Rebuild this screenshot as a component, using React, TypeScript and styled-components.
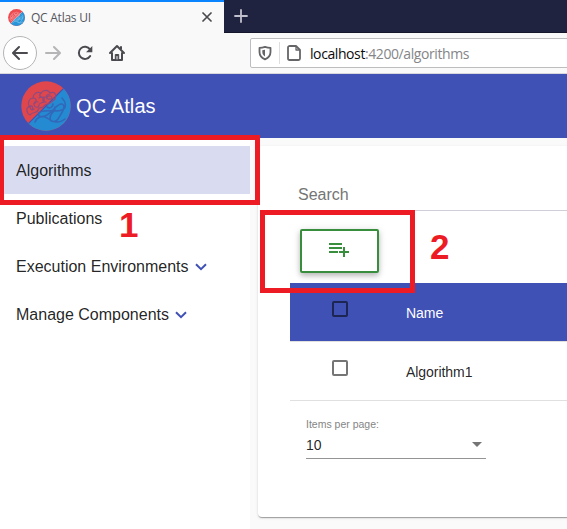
import React from "react";
import styled, { createGlobalStyle } from "styled-components";

const Global = createGlobalStyle`
  *, *::before, *::after { box-sizing: border-box; }
  body { margin: 0; overflow: hidden; background: #fafafa; font-family: "Liberation Sans", Arial, sans-serif; color: rgba(0,0,0,.87); }
  svg { display: block; flex: none; }
`;

const Window = styled.div`
  position: relative;
  width: 567px;
  height: 529px;
  overflow: hidden;
  background: #fafafa;
`;
const TabStrip = styled.div`
  display: flex;
  height: 33px;
  background: #202340;
  border-bottom: 1px solid #15162c;
`;
const Tab = styled.div`
  display: flex;
  align-items: center;
  width: 224px;
  height: 33px;
  padding: 0 11px 0 8px;
  background: #f9f9fa;
  border-top: 2px solid #0a84ff;
`;
const TabTitle = styled.span`
  flex: 1;
  margin-left: 6px;
  font: 12px "Open Sans", sans-serif;
  letter-spacing: -0.25px;
  color: #55555c;
`;
const NewTab = styled.div`
  padding: 9px 0 0 10px;
`;
const Toolbar = styled.div`
  display: flex;
  align-items: center;
  height: 41px;
  padding-left: 3px;
  background: #f9f9fa;
  border-bottom: 1px solid #d8d8dc;
`;
const NavButton = styled.span<{ $gap: number; $circle?: boolean }>`
  display: flex;
  align-items: center;
  justify-content: center;
  flex: none;
  width: ${(p) => (p.$circle ? 34 : 18)}px;
  height: ${(p) => (p.$circle ? 34 : 18)}px;
  margin-right: ${(p) => p.$gap}px;
  border: ${(p) => (p.$circle ? "1px solid #b5b5b8" : "none")};
  background: ${(p) => (p.$circle ? "#fff" : "none")};
  border-radius: 50%;
`;
const Address = styled.div`
  display: flex;
  align-items: center;
  flex: none;
  width: 340px;
  height: 30px;
  padding-left: 7px;
  background: #fff;
  border: 1px solid #bdbdc0;
  border-radius: 2px;
`;
const Divider = styled.span`
  width: 1px;
  height: 22px;
  margin: 0 6px 0 7px;
  background: #dedee0;
`;
const Url = styled.span`
  margin-left: 8px;
  padding-top: 1px;
  font: 14px "Open Sans", sans-serif;
  letter-spacing: -0.41px;
  color: #858588;
  b { font-weight: 400; color: #0c0c0d; }
`;
const Header = styled.header`
  display: flex;
  align-items: center;
  height: 64px;
  padding-left: 21px;
  gap: 5px;
  background: #3f51b5;
  color: #fff;
  font-size: 20px;
  letter-spacing: 0.1px;
`;
const Body = styled.div`
  display: flex;
  height: 391px;
`;
const Sidebar = styled.nav`
  flex: none;
  width: 250px;
  padding-top: 8px;
  background: #fff;
`;
const NavItem = styled.div<{ $active?: boolean }>`
  display: flex;
  align-items: center;
  height: 48px;
  padding: 2px 0 0 16px;
  gap: 6px;
  font-size: 16px;
  background: ${(p) => (p.$active ? "#d9dcf0" : "transparent")};
`;
const Card = styled.main`
  flex: none;
  width: 340px;
  height: 371px;
  margin: 8px 0 0 8px;
  padding-left: 32px;
  background: #fff;
  border-radius: 4px;
  box-shadow: 0 2px 1px -1px rgba(0,0,0,.2), 0 1px 1px rgba(0,0,0,.14), 0 1px 3px rgba(0,0,0,.12);
`;
const Search = styled.div`
  height: 65px;
  margin-left: 8px;
  padding-top: 39px;
  border-bottom: 1px solid #cfcfda;
  font-size: 16px;
  line-height: 19px;
  color: #757575;
`;
const AddButton = styled.div`
  display: flex;
  width: 79px;
  height: 44px;
  margin: 18px 0 10px 10px;
  padding: 7px 0 0 25px;
  border: 2px solid #388e3c;
  border-radius: 2px;
  box-shadow: 0 3px 5px rgba(0,0,0,.2), 0 1px 8px rgba(0,0,0,.12);
`;
const Row = styled.div<{ $head?: boolean }>`
  display: flex;
  align-items: center;
  height: 59px;
  padding-left: 42px;
  border-bottom: 1px solid #e0e0e0;
  font-size: 14px;
  color: ${(p) => (p.$head ? "#fff" : "rgba(0,0,0,.87)")};
  background: ${(p) => (p.$head ? "#3f51b5" : "#fff")};
`;
const Checkbox = styled.span<{ $dark?: boolean }>`
  width: 16px;
  height: 16px;
  margin: 0 58px 7px 0;
  border: 2px solid ${(p) => (p.$dark ? "#1d2553" : "#757575")};
  border-radius: 2px;
`;
const CellText = styled.span`
  padding-top: 2px;
  letter-spacing: -0.05px;
`;
const Paginator = styled.div`
  width: 180px;
  margin: 16px 0 0 16px;
`;
const PageLabel = styled.div`
  font-size: 10.5px;
  line-height: 14px;
  color: #858585;
`;
const Select = styled.div`
  display: flex;
  align-items: center;
  justify-content: space-between;
  height: 28px;
  padding: 0 4px 0 0;
  border-bottom: 1px solid #949494;
  font-size: 14px;
`;
const Highlight = styled.div<{ $x: number; $y: number; $w: number; $h: number; $left: number }>`
  position: absolute;
  left: ${(p) => p.$x}px;
  top: ${(p) => p.$y}px;
  width: ${(p) => p.$w}px;
  height: ${(p) => p.$h}px;
  border: 5px solid #ed1c24;
  border-left-width: ${(p) => p.$left}px;
`;
const Step = styled.span<{ $x: number; $y: number }>`
  position: absolute;
  left: ${(p) => p.$x}px;
  top: ${(p) => p.$y}px;
  font-size: 35px;
  font-weight: 700;
  line-height: 40px;
  color: #ed1c24;
`;

const Logo = ({ size, small }: { size: number; small?: boolean }) => (
  <svg width={size} height={size} viewBox="0 0 50 50" fill="none">
    <circle cx="25" cy="25" r="24.7" fill={small ? "#ed4b50" : "#e0474c"} />
    <path d="M42.470 7.530A24.700 24.700 0 0 1 7.530 42.470Z" fill={small ? "#2795d9" : "#248bd2"} />
    <path d="M42.400 7.600 7.600 42.400" stroke={small ? "#f9f9fa" : "#3f51b5"} strokeWidth="1.2" />
    <g stroke={small ? "#f49a9e" : "#914a7e"} strokeWidth={small ? 2 : 1.2} strokeLinecap="round">
      <path d="M9 34c-4-2-4-7-1-9-2-4 1-8 4-8 0-4 4-7 8-5 3-4 8-3 9 0 5-2 7 2 5 5 0 3-3 3-5 5s-4 0-6 3-5 0-6 4-5 1-8 5Z" />
      <path d="M8 26c3-3 5 1 3 3m1-12c4 0 4 4 1 6m7-11c-3 3 0 5 3 4m-5 1c3-2 6 0 5 3s-5 1-5 4-4 3-5 0 2-4 4-3m12-8c-4 0-5 4-2 5s5-2 7 0m-10-2c-4 1-2 6 1 5m-15 4c-2 3 1 5 3 3m13-12c2-2 5-1 5 1" />
    </g>
    <g stroke={small ? "#7cc0e8" : "#3267b9"} strokeWidth={small ? 2 : 1.6} strokeLinecap="round">
      <path d="M41 17c4 4 5 10 0 12-7 3-19-2-23 3-2 4 3 5 8 2 8-5 10-12 15-11 5 2-1 10-4 15-3 4-8 3-8-1 0-6 6-6 5-11M14 41c2-5 7-7 12-4 5 4 12 6 18 1M26 26c3 2 6 0 6-3" />
    </g>
  </svg>
);

const Chevron = () => (
  <svg width="12" height="8" viewBox="0 0 12 8" fill="none">
    <path d="M1 1.200 6 6.100 11 1.200" stroke="#3f51b5" strokeWidth="2" />
  </svg>
);

const Stroke = ({ d, color = "#4a4a4f", size = 16, width = 2 }: { d: string; color?: string; size?: number; width?: number }) => (
  <svg width={size} height={size} viewBox={`0 0 ${size} ${size}`} fill="none">
    <path d={d} stroke={color} strokeWidth={width} strokeLinecap="round" strokeLinejoin="round" />
  </svg>
);

export default function App() {
  return (
    <>
      <Global />
      <Window>
        <TabStrip>
          <Tab>
            <Logo size={17} small />
            <TabTitle>QC Atlas UI</TabTitle>
            <Stroke size={12} d="M2 1 10 9M10 1 2 9" width={1.7} />
          </Tab>
          <NewTab><Stroke size={14} d="M7 1V13M1 7H13" color="#c1c1ce" width={1.8} /></NewTab>
        </TabStrip>
        <Toolbar>
          <NavButton $circle $gap={7}><Stroke d="M15 8H1.500M7 2 1 8 7 14" /></NavButton>
          <NavButton $gap={14}><Stroke d="M1 8H14.500M9 2 15 8 9 14" color="#b5b5b7" /></NavButton>
          <NavButton $gap={14}>
            <svg width="16" height="16" viewBox="0 0 16 16" fill="none">
              <path d="M13 4.400A6.100 6.100 0 1 0 13.200 11" stroke="#4a4a4f" strokeWidth="2" strokeLinecap="round" />
              <path d="M15.300 1V7.300H9Z" fill="#4a4a4f" />
            </svg>
          </NavButton>
          <NavButton $gap={124}>
            <svg width="18" height="18" viewBox="0 0 18 18" fill="none" stroke="#4a4a4f" strokeWidth="2" strokeLinejoin="round" strokeLinecap="round">
              <path d="M2 9 9 2 16 9M4 9V16H14V9M13 3V5" />
              <path d="M7.300 16V10.500H10.700V16" fill="#4a4a4f" strokeWidth="1" />
              <path d="M9 12.500V15" stroke="#f9f9fa" strokeWidth="1" />
            </svg>
          </NavButton>
          <Address>
            <svg width="14" height="16" viewBox="0 0 14 16" fill="none">
              <path d="M7 1.800C5 2.500 3 2.800 1.500 2.800V7c0 3.700 2.400 6 5.500 7.300C10.100 13 12.500 10.700 12.500 7V2.800C11 2.800 9 2.500 7 1.800Z" stroke="#656568" strokeWidth="1.8" strokeLinejoin="round" />
              <path d="M7 4.800V11.400C5.200 10.200 4.300 8.900 4.300 7V5.300Z" fill="#656568" />
            </svg>
            <Divider />
            <svg width="16" height="16" viewBox="0 0 16 16" fill="none" stroke="#656568" strokeWidth="1.8" strokeLinejoin="round">
              <path d="M4 1H10L14 5V13.500Q14 15 12.500 15H3.500Q2 15 2 13.500V2.500Q2 1 4 1Z" />
              <path d="M10 1V5H14" strokeWidth="1.3" />
            </svg>
            <Url><b>localhost</b>:4200/algorithms</Url>
          </Address>
        </Toolbar>
        <Header>
          <Logo size={50} />
          <span>QC Atlas</span>
        </Header>
        <Body>
          <Sidebar>
            <NavItem $active>Algorithms</NavItem>
            <NavItem>Publications</NavItem>
            <NavItem>Execution Environments <Chevron /></NavItem>
            <NavItem>Manage Components <Chevron /></NavItem>
          </Sidebar>
          <Card>
            <Search>Search</Search>
            <AddButton>
              <svg width="24" height="24" viewBox="0 0 24 24" fill="#388e3c">
                <path d="M2 5H15V7H2ZM2 9H15V11H2ZM2 13H11V15H2ZM16 9H18V13H22V15H18V19H16V15H12V13H16Z" />
              </svg>
            </AddButton>
            <Row $head><Checkbox $dark /><CellText>Name</CellText></Row>
            <Row><Checkbox /><CellText>Algorithm1</CellText></Row>
            <Paginator>
              <PageLabel>Items per page:</PageLabel>
              <Select>10
                <svg width="10" height="5" viewBox="0 0 10 5"><path d="M0 0H10L5 5Z" fill="#757575" /></svg>
              </Select>
            </Paginator>
          </Card>
        </Body>
        <Highlight $x={0} $y={135} $w={260} $h={70} $left={4} />
        <Highlight $x={260} $y={210} $w={155} $h={83} $left={5} />
        <Step $x={119} $y={205}>1</Step>
        <Step $x={430} $y={227}>2</Step>
      </Window>
    </>
  );
}
